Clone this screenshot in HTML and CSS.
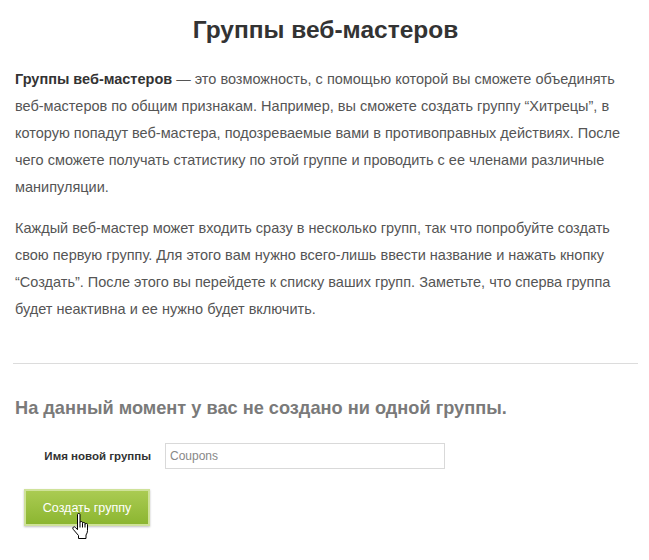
FILE: index.html
```html
<!DOCTYPE html>
<html lang="ru">
<head>
<meta charset="utf-8">
<link rel="stylesheet" href="styles.css">
</head>
<body>
<div class="page">
  <h1 class="title">Группы веб-мастеров</h1>
  <p class="text"><b>Группы веб-мастеров</b> — это возможность, с помощью которой вы сможете объединять<br>веб-мастеров по общим признакам. Например, вы сможете создать группу “Хитрецы”, в<br>которую попадут веб-мастера, подозреваемые вами в противоправных действиях. После<br>чего сможете получать статистику по этой группе и проводить с ее членами различные<br>манипуляции.</p>
  <p class="text second">Каждый веб-мастер может входить сразу в несколько групп, так что попробуйте создать<br>свою первую группу. Для этого вам нужно всего-лишь ввести название и нажать кнопку<br>“Создать”. После этого вы перейдете к списку ваших групп. Заметьте, что сперва группа<br>будет неактивна и ее нужно будет включить.</p>
  <hr class="divider">
  <h2 class="empty">На данный момент у вас не создано ни одной группы.</h2>
  <div class="form-row">
    <label class="label" for="gname">Имя новой группы</label>
    <input class="input" id="gname" type="text" value="Coupons">
  </div>
  <div class="actions">
    <button class="btn" type="button">Создать группу</button>
    <svg class="cursor" width="20" height="27" viewBox="0 0 20 27">
      <path d="M6.5 1.5 Q6.5 0.5 7.75 0.5 Q9 0.5 9 1.5 V9.5 Q9 8.5 10.25 8.5 Q11.5 8.5 11.5 9.5 V10.5 Q11.5 9.5 12.75 9.5 Q14 9.5 14 10.5 V11.5 Q14 10.5 15.25 10.5 Q16.5 10.5 16.5 11.5 V17.5 Q16.5 20 15 22 V25.5 H7.5 V22.5 L2.2 16.3 Q1.2 15 2.3 14.1 Q3.4 13.3 4.4 14.4 L6.5 16.7 Z" fill="#fff" stroke="#000" stroke-width="1" stroke-linejoin="round"/>
      <path d="M9 9.5 V14.5 M11.5 10.5 V14.5 M14 11.5 V14.5" stroke="#000" stroke-width="1" fill="none"/>
    </svg>
  </div>
</div>
</body>
</html>
```

FILE: styles.css
```css
html, body {
  margin: 0;
  padding: 0;
  background: #fff;
}

body {
  font-family: "Liberation Sans", Arial, sans-serif;
  color: #555;
}

.page {
  padding: 16px 11px 20px 13px;
}

.title {
  margin: 0;
  font-size: 24.5px;
  line-height: 28px;
  font-weight: bold;
  color: #333;
  text-align: center;
}

.text {
  margin: 22px 0 0 2px;
  font-size: 14.5px;
  line-height: 27px;
  color: #555;
  white-space: nowrap;
}

.text b {
  color: #333;
}

.text.second {
  margin-top: 14px;
}

.divider {
  margin: 40px 0 0 0;
  border: 0;
  border-top: 1px solid #dcdcdc;
  height: 0;
}

.empty {
  margin: 32px 0 0 2px;
  font-size: 18.2px;
  line-height: 24px;
  font-weight: bold;
  color: #7a7a7a;
}

.form-row {
  display: flex;
  align-items: center;
  gap: 14px;
  margin-top: 23px;
}

.label {
  width: 138px;
  text-align: right;
  font-size: 11.5px;
  font-weight: bold;
  color: #333;
}

.input {
  box-sizing: border-box;
  width: 280px;
  height: 26px;
  margin: 0;
  padding: 0 4px;
  border: 1px solid #d9d9d9;
  font-family: "Liberation Sans", Arial, sans-serif;
  font-size: 12px;
  color: #888;
  background: #fff;
  outline: none;
}

.actions {
  position: relative;
  margin-top: 20px;
  margin-left: 11px;
  height: 50px;
}

.btn {
  box-sizing: border-box;
  width: 126px;
  height: 37px;
  padding: 0;
  border: 2px solid #cfe29a;
  background: linear-gradient(#aacb52, #8cb631);
  color: #fff;
  font-family: "Liberation Sans", Arial, sans-serif;
  font-size: 12.5px;
  box-shadow: 0 1px 2px rgba(0, 0, 0, 0.25);
  cursor: pointer;
}

.cursor {
  position: absolute;
  left: 47px;
  top: 24px;
}
```
